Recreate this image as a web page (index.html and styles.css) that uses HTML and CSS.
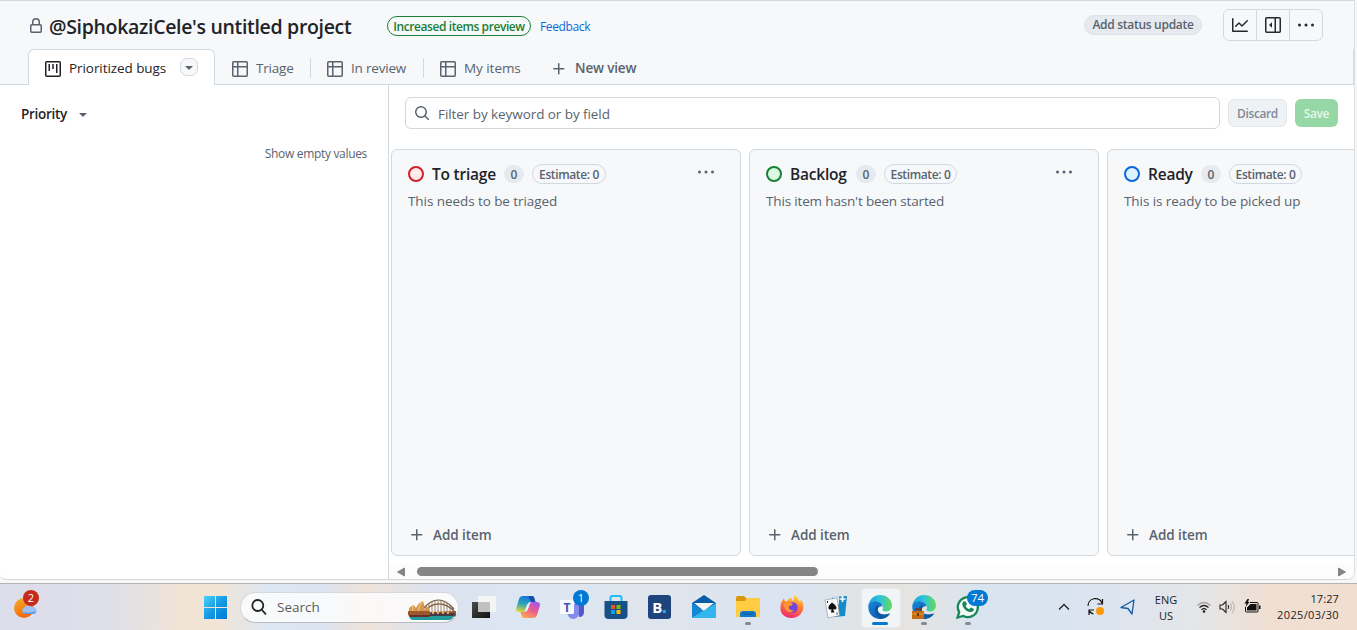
FILE: index.html
```html
<!DOCTYPE html>
<html lang="en">
<head>
<meta charset="utf-8">
<title>@SiphokaziCele's untitled project</title>
<link rel="stylesheet" href="styles.css">
</head>
<body>
<svg class="defs" width="0" height="0">
  <defs>
    <symbol id="table" viewBox="0 0 16 16"><path d="M0 1.75C0 .784.784 0 1.75 0h12.5C15.216 0 16 .784 16 1.75v12.5A1.75 1.75 0 0 1 14.25 16H1.75A1.75 1.75 0 0 1 0 14.25ZM6.5 6.5v8h7.75a.25.25 0 0 0 .25-.25V6.5Zm8-1.5V1.75a.25.25 0 0 0-.25-.25H6.5V5Zm-13 1.5v7.75c0 .138.112.25.25.25H5v-8ZM5 5V1.5H1.75a.25.25 0 0 0-.25.25V5Z"/></symbol>
    <symbol id="plus" viewBox="0 0 16 16"><path d="M7.75 2a.75.75 0 0 1 .75.75V7h4.25a.75.75 0 0 1 0 1.5H8.5v4.25a.75.75 0 0 1-1.5 0V8.5H2.75a.75.75 0 0 1 0-1.5H7V2.75A.75.75 0 0 1 7.75 2Z"/></symbol>
    <symbol id="caret" viewBox="0 0 16 16"><path d="m4.427 7.427 3.396 3.396a.25.25 0 0 0 .354 0l3.396-3.396A.25.25 0 0 0 11.396 7H4.604a.25.25 0 0 0-.177.427Z"/></symbol>
    <symbol id="dots" viewBox="0 0 18 16"><circle cx="2.5" cy="8" r="1.5"/><circle cx="9" cy="8" r="1.5"/><circle cx="15.5" cy="8" r="1.5"/></symbol>
    <linearGradient id="edgeA" x1="0" y1=".3" x2="1" y2=".3"><stop offset="0" stop-color="#1b9de2"/><stop offset=".5" stop-color="#2fc4d8"/><stop offset="1" stop-color="#66dc55"/></linearGradient>
    <linearGradient id="edgeB" x1="0" y1="0" x2="1" y2="1"><stop offset="0" stop-color="#1a86dc"/><stop offset="1" stop-color="#0b4f9c"/></linearGradient>
    <symbol id="edge" viewBox="0 0 24 24">
      <path fill="url(#edgeB)" d="M.3 11C1 6.500 5 5.500 8 6c4 .5 6.500 3 6.500 5.500-2-1-5 .5-5 3.500 0 4 5 6 12.500 3.500C20 21.800 16.500 24 12 24 5.500 24 0 19 .3 11Z"/>
      <path fill="#0c59a4" d="M9.500 10c-4 2-4 10 3 13.500 4.500 0 7.500-2 9.500-5-4 2-10.500 1.500-12-2.500-.7-2 .3-4 1.500-4.800Z"/>
      <path fill="url(#edgeA)" d="M.3 11C1.200 4.500 6 0 12 0c7 0 12 5 12 10.500 0 3.500-2.500 6-6 6-2 0-4-.7-3.500-1.900.7-1.200.5-2.500 0-3.800C13 7.500 10 6 7 6.300 4 6.500 1.300 8 .3 11Z"/>
    </symbol>
  </defs>
</svg>

<div class="screen">
  <main class="window">
    <header class="top">
      <div class="title-row">
        <svg class="lock" viewBox="0 0 16 16"><path d="M4 4a4 4 0 0 1 8 0v2h.25c.966 0 1.750.784 1.750 1.750v5.500A1.750 1.750 0 0 1 12.250 15h-8.500A1.750 1.750 0 0 1 2 13.250v-5.500C2 6.784 2.784 6 3.750 6H4Zm8.250 3.500h-8.500a.25.25 0 0 0-.25.25v5.500c0 .138.112.25.25.25h8.500a.25.25 0 0 0 .25-.25v-5.500a.25.25 0 0 0-.25-.25ZM10.500 6V4a2.500 2.500 0 1 0-5 0v2Z"/></svg>
        <h1 class="title">@SiphokaziCele's untitled project</h1>
        <span class="preview"><span>Increased items preview</span></span>
        <a class="feedback">Feedback</a>
        <button class="status">Add status update</button>
        <div class="tools">
          <button class="tool"><svg width="16" height="16" viewBox="0 0 16 16"><path d="M1.500 1.750V13.500h13.750a.75.75 0 0 1 0 1.500H.75a.75.75 0 0 1-.75-.75V1.750a.75.75 0 0 1 1.500 0Zm14.280 2.530-5.250 5.250a.75.75 0 0 1-1.060 0L7 7.060 4.280 9.780a.751.751 0 0 1-1.042-.018.751.751 0 0 1-.018-1.042l3.250-3.250a.75.75 0 0 1 1.060 0L10 7.940l4.720-4.720a.751.751 0 0 1 1.042.018.751.751 0 0 1 .018 1.042Z"/></svg></button>
          <button class="tool"><svg width="16" height="16" viewBox="0 0 16 16"><rect x=".75" y=".75" width="14.500" height="14.500" rx="1" fill="none" stroke="currentColor" stroke-width="1.500"/><path d="M9.500 1H11v14H9.500ZM7 5.200v5.600L4 8Z"/></svg></button>
          <button class="tool"><svg width="18" height="16"><use href="#dots"/></svg></button>
        </div>
      </div>
      <nav class="tabs">
        <div class="tab active">
          <svg width="16" height="16" viewBox="0 0 16 16"><rect x=".75" y=".75" width="14.500" height="14.500" rx="1" fill="none" stroke="currentColor" stroke-width="1.500"/><path d="M3.500 3H5v7H3.500ZM7.250 3h1.500v5h-1.500ZM11 3h1.500v9H11Z"/></svg>
          <span class="tab-text bugs">Prioritized bugs</span>
          <span class="tab-menu"><svg width="16" height="16"><use href="#caret"/></svg></span>
        </div>
        <div class="tab t1"><svg width="16" height="16"><use href="#table"/></svg><span class="tab-text">Triage</span></div>
        <div class="tab t2"><svg width="16" height="16"><use href="#table"/></svg><span class="tab-text">In review</span></div>
        <div class="tab t3"><svg width="16" height="16"><use href="#table"/></svg><span class="tab-text">My items</span></div>
        <div class="tab new"><svg width="16" height="16"><use href="#plus"/></svg><span class="tab-text strong">New view</span></div>
      </nav>
    </header>
    <div class="content">
      <aside class="side">
        <div class="slice"><span>Priority</span><svg width="16" height="16"><use href="#caret"/></svg></div>
        <div class="empty">Show empty values</div>
      </aside>
      <section class="main">
        <div class="filter-row">
          <div class="filter">
            <svg width="16" height="16" viewBox="0 0 16 16"><path d="M10.680 11.740a6 6 0 0 1-7.922-8.982 6 6 0 0 1 8.982 7.922l3.040 3.040a.749.749 0 0 1-.326 1.275.749.749 0 0 1-.734-.215ZM11.500 7a4.499 4.499 0 1 0-8.997 0A4.499 4.499 0 0 0 11.500 7Z"/></svg>
            <span>Filter by keyword or by field</span>
          </div>
          <button class="btn discard">Discard</button>
          <button class="btn save">Save</button>
        </div>
        <div class="board">
          <article class="column">
            <div class="col-head"><i class="ring red"></i><h2 class="w-triage">To triage</h2><span class="count">0</span><span class="estimate">Estimate: 0</span><svg class="more" width="18" height="16"><use href="#dots"/></svg></div>
            <p>This needs to be triaged</p>
            <div class="add"><svg width="16" height="16"><use href="#plus"/></svg><span>Add item</span></div>
          </article>
          <article class="column">
            <div class="col-head"><i class="ring green"></i><h2 class="w-backlog">Backlog</h2><span class="count">0</span><span class="estimate narrow">Estimate: 0</span><svg class="more" width="18" height="16"><use href="#dots"/></svg></div>
            <p class="p2">This item hasn't been started</p>
            <div class="add"><svg width="16" height="16"><use href="#plus"/></svg><span>Add item</span></div>
          </article>
          <article class="column">
            <div class="col-head"><i class="ring blue"></i><h2 class="w-ready">Ready</h2><span class="count">0</span><span class="estimate narrow">Estimate: 0</span></div>
            <p>This is ready to be picked up</p>
            <div class="add"><svg width="16" height="16"><use href="#plus"/></svg><span>Add item</span></div>
          </article>
        </div>
        <div class="scroll">
          <svg width="8" height="10" viewBox="0 0 8 10"><path d="M7.500 1v8L.5 5Z" stroke="#858585" stroke-linejoin="round"/></svg>
          <div class="thumb"></div>
          <svg class="right" width="8" height="10" viewBox="0 0 8 10"><path d="M.5 1v8l7-4Z" stroke="#858585" stroke-linejoin="round"/></svg>
        </div>
      </section>
    </div>
  </main>

  <footer class="taskbar">
    <div class="weather">
      <svg width="26" height="28" viewBox="0 0 26 28">
        <defs><linearGradient id="sun" x1="0" y1="0" x2=".4" y2="1"><stop offset="0" stop-color="#f0b12d"/><stop offset="1" stop-color="#f5690c"/></linearGradient></defs>
        <circle cx="10" cy="17" r="10" fill="url(#sun)"/>
        <path d="M10.500 23a3.500 3.500 0 0 1 0-6.500 4 4 0 0 1 7-.5 3.700 3.700 0 0 1 2.500 7Z" fill="#9cc0f6"/>
        <path d="M9 21q7 2 13-1-.5 3-3 3h-8q-1.500 0-2-2Z" fill="#6294e8"/>
      </svg>
      <span class="weather-badge">2</span>
    </div>
    <svg class="start" width="23" height="23" viewBox="0 0 23 23">
      <defs><linearGradient id="win" x1="0" y1="0" x2="1" y2="1"><stop offset="0" stop-color="#4fd0fb"/><stop offset=".5" stop-color="#149be3"/><stop offset="1" stop-color="#0078d4"/></linearGradient></defs>
      <path d="M0 0h11v11H0ZM12 0H23v11H12ZM0 12h11V23H0ZM12 12H23V23H12Z" fill="url(#win)"/>
    </svg>
    <div class="search">
      <svg width="16" height="16" viewBox="0 0 16 16"><g fill="none" stroke="#252525" stroke-width="1.800" stroke-linecap="round"><circle cx="6.800" cy="6.500" r="5.500"/><path d="m11 11 3.500 3.800"/></g></svg>
      <span>Search</span>
      <svg class="sydney" width="49" height="21" viewBox="0 0 49 21">
        <g fill="none">
          <path d="M15 10Q30-8 46 10M15 13Q31-3 47 13" stroke="#75553b" stroke-width="1.200"/>
          <path d="M18 7v7M21 4v10M24 3v11M27 2v12M30 1.500v12M33 1.500v12M36 2.500v11M39 4v10M42 6v8M45 9v5" stroke="#86684a" stroke-width=".8"/>
        </g>
        <path d="M1 13V9l4-3q2 1 3 3Q10 4 15 2q2 4 1 9 2-3 5-4v7H1Z" fill="#d9964a"/>
        <path d="M5 6q-1 3 0 7M14 3q-3 4-4 10" stroke="#f6ce87" fill="none"/>
        <path d="M0 12h22v1l26-1v5l-5 2H4l-4-3Z" fill="#9c592c"/>
        <path d="M22 14h25v2l-4 2H22Z" fill="#433b49"/>
        <path d="M24 13h2v2h-2zM29 13h2v2h-2zM34 12h2v3h-2zM39 13h2v2h-2z" fill="#e8a457"/>
        <path d="M1 17h45q-2 4-5 4H5q-3 0-4-4Z" fill="#239a9b"/>
        <path d="M1 16h22l-2 2H2Z" fill="#6c2e28"/>
      </svg>
    </div>
    <div class="apps">
      <div class="app"><svg width="24" height="24" viewBox="0 0 24 24"><defs><linearGradient id="tv" x1="0" y1="0" x2="1" y2="1"><stop stop-color="#4b4b4b"/><stop offset="1" stop-color="#111"/></linearGradient></defs><path d="M0 7h18v16H0Z" fill="url(#tv)"/><path d="M6 1h18v16H6Z" fill="#f4f4f4"/><path d="M6 7h12v10H6Z" fill="#c1c1c1"/></svg></div>
      <div class="app"><svg width="24" height="24" viewBox="0 0 24 24">
        <defs><linearGradient id="cpA" x1=".4" y1="0" x2=".2" y2="1"><stop stop-color="#1976d9"/><stop offset=".5" stop-color="#2da7b8"/><stop offset="1" stop-color="#e6d92f"/></linearGradient><linearGradient id="cpB" x1=".8" y1="0" x2=".3" y2="1"><stop stop-color="#a456e9"/><stop offset=".5" stop-color="#ed5b8c"/><stop offset="1" stop-color="#ffa653"/></linearGradient></defs>
        <path d="M7 1h9q2 0 2.500 3l1 3h-5q-2 0-2.600 2l-2 6q-.7 2-2.900 2H3q-4 0-2.500-5L3 4q1-3 4-3Z" fill="url(#cpA)"/>
        <path d="M12.500 1H16q2 0 2.500 3l1 3h-3Q14 7 12.500 1Z" fill="#174ca8"/>
        <path d="M17 23H8q-2 0-2.500-3l-1-3h4q2.500 0 3.100-2l2-6q.7-2 2.900-2H21q4 0 2.500 5L21 20q-1 3-4 3Z" fill="url(#cpB)"/>
        <path d="m11 9.500 3-1.500-2.200 6.500-2.800 1.500Z" fill="#f3eff6"/>
      </svg></div>
      <div class="app"><svg width="26" height="24" viewBox="0 0 26 24"><circle cx="20" cy="9" r="4" fill="#5059c9"/><path d="M17 9h8v8q0 5-5 5Z" fill="#5059c9"/><path d="M9 9h11v8q0 7-6 7-5 0-6-7Z" fill="#858bea"/><rect x="1" y="5" width="14" height="14" rx="1" fill="#f8f8ff"/><text x="8" y="16.500" class="teams-t">T</text></svg><span class="badge">1</span></div>
      <div class="app"><svg width="24" height="24" viewBox="0 0 24 24"><path d="M6.500 7V3q0-2 2-2h7q2 0 2 2v4" fill="none" stroke="#20bdf4" stroke-width="2"/><path d="M.5 6h23v14q0 4-4 4h-15q-4 0-4-4Z" fill="#174f87"/><path d="M7 10h4v4H7Z" fill="#f25022"/><path d="M12.500 10h4v4h-4Z" fill="#7fba00"/><path d="M7 15h4v4H7Z" fill="#00a4ef"/><path d="M12.500 15h4v4h-4Z" fill="#ffb900"/></svg></div>
      <div class="app"><span class="booking">B<b>.</b></span></div>
      <div class="app"><svg width="24" height="24" viewBox="0 0 24 24"><path d="M0 8 12 0l12 8v6H0Z" fill="#075ca8"/><path d="M2 8h20l-10 8Z" fill="#f4f4f4"/><path d="M0 8l12 8L0 23Z" fill="#1686d5"/><path d="M24 8v15H0Z" fill="#32b6ee"/></svg></div>
      <div class="app run"><svg width="24" height="24" viewBox="0 0 24 24"><path d="M0 3q0-2 2-2h6l3 3v5H0Z" fill="#d9980c"/><path d="M0 6h9l2-3h12q1 0 1 1v18H0Z" fill="#ffcc43"/><path d="M4 22v-3q0-3 3-3h10q3 0 3 3v3Z" fill="#1477c6"/><path d="M7 19h10" stroke="#075b9f"/></svg></div>
      <div class="app"><svg width="24" height="24" viewBox="0 0 24 24">
        <defs><linearGradient id="ff" x1=".7" y1="0" x2=".4" y2="1"><stop stop-color="#ffe13d"/><stop offset=".5" stop-color="#ff7834"/><stop offset="1" stop-color="#f02872"/></linearGradient></defs>
        <path d="M4 3q0 2 1 3l2 .3Q9 3 12 3q-1 2 1 3 1-4 1-6 4 2 6 7l1-3q4 6 1.500 12Q19 23 12 23 4 23 1 17-1 9 4 3Z" fill="url(#ff)"/><circle cx="12.500" cy="12.500" r="5.200" fill="#7544d8"/><path d="M4 9q4-3 9 0-1 2-4 2-1 5 5 4-3 4-7 1-3-2-3-7Z" fill="#ff9638"/>
      </svg></div>
      <div class="app"><svg width="24" height="24" viewBox="0 0 24 24"><path d="m8 2 15-1-2 20-11 1Z" fill="#168bc9"/><path d="m8 2 7-1v9Z" fill="#d8e4ec"/><path d="m1 5 12-2 2.500 17.500L4 23Z" fill="#fafafa" stroke="#8d9196" stroke-width=".6"/><path d="M8 7.500q-4.500 3.500-3.500 6 1 2 3 .5l-.5 3.500h3.500L9 14q4 1.500 3.500-1.500Q12 10 8 7.500Z" fill="#111"/><path d="M18.500 1v6M15.500 4h6" stroke="#fff" stroke-width="1.700"/><path d="M3.500 6v2M13 17.500v2" stroke="#222"/></svg></div>
      <div class="app current"><svg width="24" height="24"><use href="#edge"/></svg></div>
      <div class="app run"><svg width="24" height="24"><use href="#edge"/><path d="M0 16h12v8H0Z" fill="#c56b13"/><path d="M4 16v-2h5v2" fill="none" stroke="#713c18" stroke-width="1.400"/><path d="M0 19h12" stroke="#e7a531"/><path d="M5 18h2v3H5Z" fill="#673b1c"/></svg></div>
      <div class="app run"><svg width="24" height="24" viewBox="0 0 24 24"><path d="M1.500 22.500 3.200 17.200A10 10 0 1 1 7.200 21Z" fill="#f4faf7" stroke="#17875a" stroke-width="2.300"/><path d="M7.500 6.500Q5 8.500 7.500 12.500q3 4.500 7 4.500 3.500-.5 3.500-3l-3-1.500-2 1.800q-2.500-1-3.500-3.500L11 9.300 9.700 6.500Z" fill="#17875a"/></svg><span class="badge wide">74</span></div>
    </div>
    <div class="tray">
      <svg class="chev" width="12" height="8" viewBox="0 0 12 8"><path d="m1 6.500 5-5 5 5" fill="none" stroke="#222" stroke-width="1.300"/></svg>
      <svg class="sync" width="18" height="18" viewBox="0 0 18 18"><g fill="none" stroke="#151515" stroke-width="1.200"><path d="M1 8a7.300 7.300 0 0 1 14-3M15.500 1v5h-5M2 17v-5h5M2 12q1 3 4.500 4"/></g><circle cx="13" cy="13" r="4" fill="#ff9805"/></svg>
      <svg class="location" width="15" height="16" viewBox="0 0 15 16"><path d="M1 8.500 14 1l-2 14-4-5.500Z" fill="none" stroke="#1458a5" stroke-width="1.300" stroke-linejoin="round"/></svg>
      <div class="lang"><span>ENG</span><span>US</span></div>
      <svg class="wifi" width="14" height="12" viewBox="0 0 14 12"><g fill="none" stroke="#222" stroke-width="1.200"><path d="M.5 4.500q6.500-6 13 0" stroke="#a5a29e"/><path d="M2.500 6.500q4.500-4 9 0M4.500 8.700q2.500-2.200 5 0"/><circle cx="7" cy="10.500" r=".7" fill="#222"/></g></svg>
      <svg class="sound" width="16" height="14" viewBox="0 0 16 14"><g fill="none" stroke="#222" stroke-width="1.100"><path d="M1 5h2.500L7 1.500v11L3.500 9H1ZM9 5q1.500 2 0 4"/><path d="M11 3q3 4 0 8M13 1q4.500 6 0 12" stroke="#bbb5ae"/></g></svg>
      <svg class="battery" width="17" height="14" viewBox="0 0 17 14"><path d="M6 3.500h7q1 0 1 1V12q0 1-1 1H2.500q-1 0-1-1V8" fill="none" stroke="#111"/><path d="M6.500 5H12.500v6.500H3V8.500ZM15 6.500h1.500v3.500H15ZM3.500 0 .5 4.500h2L1.500 8 5.500 3H4L5 0Z" fill="#111"/></svg>
      <div class="clock"><span class="time">17:27</span><span class="date">2025/03/30</span></div>
    </div>
  </footer>
</div>
</body>
</html>
```
FILE: styles.css
```css
* { box-sizing: border-box; }
body { margin: 0; background: #f7f7f7; font-family: "Open Sans", "Noto Sans", sans-serif; font-size: 13.500px; color: #1f2328; overflow: hidden; }
svg { display: block; flex: none; fill: currentColor; }
button { font: inherit; padding: 0; margin: 0; border: 0; background: none; color: inherit; }
h1, h2, p { margin: 0; white-space: nowrap; }
.defs { position: absolute; }
.screen { width: 1357px; height: 630px; display: flex; flex-direction: column; }

.window { width: 1355px; height: 580px; flex: none; display: flex; flex-direction: column; background: #fff; border: 1px solid #d1d9e0; border-left: 0; border-right-color: #dcdfe2; border-bottom-color: #d5d5d5; border-radius: 0 0 8px 6px; overflow: hidden; }
.top { height: 84px; flex: none; background: #f6f8fa; border-bottom: 1px solid #d1d9e0; }
.title-row { height: 48px; display: flex; align-items: center; padding-left: 28px; padding-right: 31px; white-space: nowrap; }
.lock { width: 16px; height: 16px; color: #59636e; margin: 1px 5px 0 0; }
.title { width: 338px; font-size: 19.500px; line-height: 28px; font-weight: 600; letter-spacing: -.32px; padding-top: 3px; }
.preview { width: 144px; height: 20px; border: 1px solid #1a7f37; border-radius: 10px; color: #1a7f37; font-size: 12px; font-weight: 600; letter-spacing: -.42px; display: flex; align-items: center; justify-content: center; padding-top: 1px; margin-top: 2px; }
.feedback { color: #0969da; font-size: 12px; letter-spacing: -.36px; margin: 3px 0 0 9px; }
.status { width: 118px; height: 20px; border-radius: 10px; background: #e6eaef; border: 1px solid #dde3e8; color: #59636e; font-size: 12px; line-height: 18px; font-weight: 600; letter-spacing: -.29px; margin-left: auto; }
.tools { height: 32px; display: flex; border: 1px solid #d1d9e0; border-radius: 6px; margin-left: 21px; color: #25292e; }
.tool { width: 33px; display: flex; align-items: center; justify-content: center; border-right: 1px solid #d1d9e0; }
.tool:last-child { border-right: 0; width: 32px; }

.tabs { height: 36px; display: flex; padding-left: 28px; color: #59636e; border-right: 1px solid #d1d9e0; }
.tab { height: 36px; display: flex; align-items: center; padding-top: 3px; white-space: nowrap; position: relative; }
.tab-text { margin-left: 8px; letter-spacing: -.2px; line-height: 20px; margin-top: -1px; }
.tab.active { width: 187px; background: #fff; border: 1px solid #d1d9e0; border-bottom: 0; border-radius: 6px 6px 0 0; padding-left: 16px; color: #1f2328; padding-top: 2px; }
.tab-text.bugs { width: 111px; letter-spacing: -.07px; }
.tab-menu { width: 18px; height: 18px; display: grid; place-items: center; border: 1px solid #d1d9e0; border-radius: 7px; background: #f6f8fa; color: #59636e; margin-top: -3px; }
.t1 { width: 95px; padding-left: 17px; }
.t2, .t3 { width: 113px; padding-left: 17px; }
.t3 .tab-text { letter-spacing: -.05px; }
.t2::before, .t3::before { content: ""; position: absolute; left: 0; top: 9px; height: 20px; width: 1px; background: #d1d9e0; }
.new { padding-left: 15px; }
.strong { font-weight: 600; }
.new .tab-text { letter-spacing: -.17px; }

.content { flex: 1; display: flex; min-height: 0; }
.side { width: 389px; flex: none; border-right: 1px solid #d1d9e0; padding: 19px 21px 0; }
.slice { display: flex; align-items: center; gap: 8px; font-weight: 600; line-height: 20px; letter-spacing: -.28px; }
.slice svg { color: #59636e; }
.empty { text-align: right; color: #59636e; font-size: 12px; letter-spacing: -.32px; line-height: 18px; margin-top: 21px; }
.main { flex: 1; min-width: 0; display: flex; flex-direction: column; }
.filter-row { height: 64px; flex: none; display: flex; padding: 12px 16px 0; gap: 8px; }
.filter { width: 815px; height: 32px; display: flex; align-items: center; gap: 8px; padding-left: 8px; border: 1px solid #d1d9e0; border-radius: 6px; color: #59636e; white-space: nowrap; letter-spacing: -.07px; }
.filter span { padding-top: 1px; }
.btn { height: 28px; margin-top: 2px; border-radius: 6px; font-size: 12px; font-weight: 600; letter-spacing: -.4px; padding-top: 1px; }
.discard { width: 59px; background: #eff2f5; color: #818b98; border: 1px solid #e3e7eb; }
.save { width: 43px; background: #95d8a6; color: #e7f6eb; }

.board { height: 407px; flex: none; display: flex; gap: 8px; padding-left: 2px; overflow: hidden; }
.column { width: 350px; height: 407px; flex: none; display: flex; flex-direction: column; background: #f6f8fa; border: 1px solid #d1d9e0; border-radius: 6px; padding: 14px 16px 10px; }
.col-head { height: 20px; display: flex; align-items: center; }
.ring { width: 16px; height: 16px; border: 2px solid; border-radius: 50%; margin-right: 8px; }
.red { color: #cf222e; background: #ffebe9; }
.green { color: #1a7f37; background: #dafbe1; }
.blue { color: #0969da; background: #ddf4ff; }
h2 { font-size: 15.500px; font-weight: 600; line-height: 20px; letter-spacing: -.22px; }
.w-triage { width: 72px; }
.w-backlog { width: 66px; }
.w-ready { width: 53px; }
.count { width: 20px; height: 18px; border-radius: 9px; background: #e6eaef; color: #59636e; font-size: 12px; line-height: 19px; text-align: center; font-weight: 600; }
.estimate { width: 74px; height: 20px; border: 1px solid #d1d9e0; border-radius: 10px; color: #59636e; font-size: 12px; line-height: 19px; text-align: center; font-weight: 600; letter-spacing: -.38px; margin-left: 8px; white-space: nowrap; }
.narrow { width: 73px; }
.more { color: #59636e; margin: -5px 9px 0 auto; }
.column p { color: #59636e; line-height: 20px; margin-top: 7px; letter-spacing: -.07px; }
.column .p2 { letter-spacing: -.16px; }
.add { display: flex; align-items: center; gap: 8px; margin-top: auto; padding-left: 1px; height: 20px; color: #59636e; font-weight: 600; }
.add span { letter-spacing: -.05px; }
.scroll { display: flex; align-items: center; height: 23px; flex: none; color: #858585; background: linear-gradient(#fff 8px, #fcfcfc 8px); padding: 8px 8px 0 8px; }
.thumb { width: 401px; height: 9px; margin-left: 12px; border-radius: 5px; background: #858585; }
.scroll .right { margin-left: auto; }

.taskbar { height: 47px; flex: none; margin-top: 3px; border-top: 1px solid #b3b3b5; display: flex; align-items: center; color: #222; background: linear-gradient(90deg, #dcddea 0, #dedfe9 110px, #f2e4d3 188px, #f2e4d5 216px, #dce7f3 270px, #dde3f0 325px, #efe2d8 365px, #dde2ef 430px, #dce6f2 520px, #dfe5ec 660px, #dae4f1 800px, #e7e4df 900px, #d9e4f1 980px, #dae4f1 1070px, #e3e6ea 1190px, #f0dfd2 1270px, #f1ded0 100%); }
.weather { width: 28px; height: 32px; margin: -4px 162px 0 14px; position: relative; }
.weather svg { margin-top: 2px; }
.weather-badge { position: absolute; left: 9px; top: 1px; width: 16px; height: 16px; border-radius: 50%; background: #c42b1c; color: #fff; font-size: 11px; line-height: 16px; text-align: center; }
.search { width: 219px; height: 31px; margin-left: 13px; border: 1px solid #d4d8dc; border-bottom-color: #b9bdc1; border-radius: 16px; display: flex; align-items: center; background: linear-gradient(90deg, #fafafa, #f6fafd 35%, #fbf8f6 55%, #fafbfd); color: #5b5b5b; }
.search > svg:first-child { margin: 0 10px; }
.search .sydney { margin: 4px 1px 0 auto; }
.apps { display: flex; margin-left: 3px; }
.app { width: 44px; height: 46px; display: grid; place-items: center; position: relative; }
.run::after { content: ""; position: absolute; left: 19px; bottom: 5px; width: 6px; height: 3px; border-radius: 2px; background: #858991; }
.current::before { content: ""; position: absolute; left: 3px; top: 4px; width: 38px; height: 38px; border-radius: 4px; background: #f2f5f8; border: 1px solid #e5e8ec; }
.current::after { content: ""; position: absolute; left: 14px; bottom: 5px; width: 16px; height: 3px; border-radius: 2px; background: #0078d4; }
.current svg { position: relative; }
.badge { position: absolute; left: 23px; top: 6px; min-width: 16px; height: 16px; border-radius: 8px; background: #0078d4; color: #fff; font-size: 11px; line-height: 16px; text-align: center; }
.wide { left: 21px; width: 21px; font-size: 11.500px; }
.teams-t { font: bold 12px "Open Sans", sans-serif; fill: #464eb8; text-anchor: middle; }
.booking { width: 23px; height: 24px; border-radius: 3px; background: #1f437c; color: #fff; font: bold 15px/24px "Open Sans", sans-serif; text-align: center; margin-left: -1px; }
.booking b { color: #20b7ef; }
.tray { display: flex; align-items: center; flex: 1; font-size: 11px; }
.chev { margin-left: 68px; }
.sync { margin-left: 17px; }
.location { margin-left: 15px; }
.lang { width: 32px; margin-left: 15px; display: flex; flex-direction: column; align-items: center; line-height: 16px; padding-top: 1px; letter-spacing: 0; }
.wifi { margin-left: 15px; }
.sound { margin-left: 8px; }
.battery { margin-left: 9px; margin-top: -2px; }
.clock { display: flex; flex-direction: column; align-items: flex-end; margin-left: auto; margin-right: 18px; line-height: 16px; }
.clock .time { letter-spacing: .1px; }
.clock .date { letter-spacing: .35px; }
```
